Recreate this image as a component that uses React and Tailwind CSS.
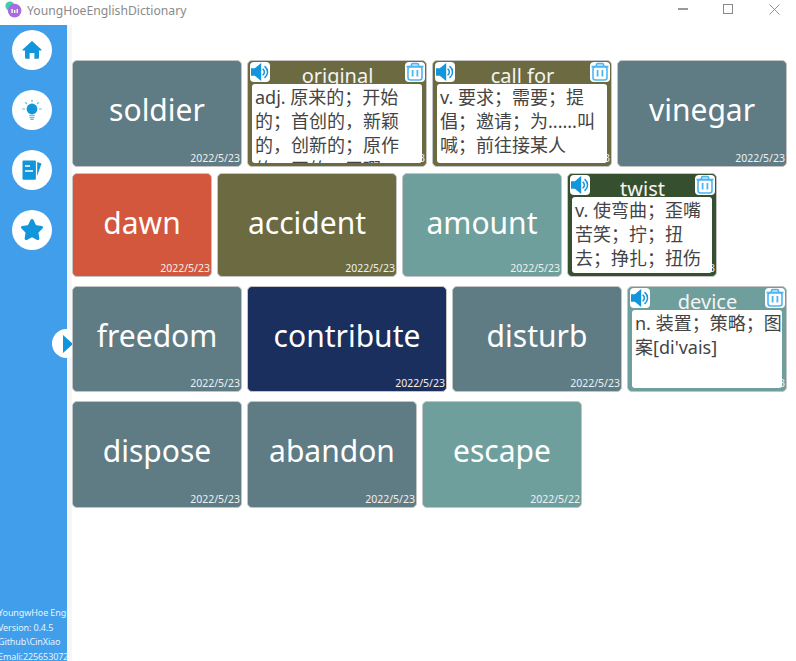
import { Star } from 'lucide-react'

const rows = [
  { h: 'h-[107px]', gap: 'mt-0', pad: 'pb-[8px]', cards: [
    { word: 'soldier', w: 'w-[170px]', bg: 'bg-[#5f7b84]', date: '2022/5/23' },
    { word: 'original', w: 'w-[180px]', bg: 'bg-[#6c6a41]', date: '2022/5/23', open: true, text: 'adj. 原来的；开始的；首创的，新颖的，创新的；原作的；正的；无瑕' },
    { word: 'call for', w: 'w-[180px]', bg: 'bg-[#6c6a41]', date: '2022/5/23', open: true, text: 'v. 要求；需要；提倡；邀请；为......叫喊；前往接某人' },
    { word: 'vinegar', w: 'w-[170px]', bg: 'bg-[#5f7b84]', date: '2022/5/23' },
  ] },
  { h: 'h-[104px]', gap: 'mt-[6px]', pad: 'pb-[6px]', cards: [
    { word: 'dawn', w: 'w-[140px]', bg: 'bg-[#d2573c]', date: '2022/5/23' },
    { word: 'accident', w: 'w-[180px]', bg: 'bg-[#6c6a41]', date: '2022/5/23' },
    { word: 'amount', w: 'w-[160px]', bg: 'bg-[#6f9f9c]', date: '2022/5/23' },
    { word: 'twist', w: 'w-[150px]', bg: 'bg-[#36502f]', date: '2022/5/23', open: true, text: 'v. 使弯曲；歪嘴苦笑；拧；扭去；挣扎；扭伤' },
  ] },
  { h: 'h-[106px]', gap: 'mt-[9px]', pad: 'pb-[8px]', cards: [
    { word: 'freedom', w: 'w-[170px]', bg: 'bg-[#5f7b84]', date: '2022/5/23' },
    { word: 'contribute', w: 'w-[200px]', bg: 'bg-[#1a2f5d]', date: '2022/5/23' },
    { word: 'disturb', w: 'w-[170px]', bg: 'bg-[#5f7b84]', date: '2022/5/23' },
    { word: 'device', w: 'w-[160px]', bg: 'bg-[#6f9f9c]', date: '2022/5/23', open: true, text: "n. 装置；策略；图案[di'vais]" },
  ] },
  { h: 'h-[107px]', gap: 'mt-[9px]', pad: 'pb-[8px]', cards: [
    { word: 'dispose', w: 'w-[170px]', bg: 'bg-[#5f7b84]', date: '2022/5/23' },
    { word: 'abandon', w: 'w-[170px]', bg: 'bg-[#5f7b84]', date: '2022/5/23' },
    { word: 'escape', w: 'w-[160px]', bg: 'bg-[#6f9f9c]', date: '2022/5/22' },
  ] },
]

function SpeakerIcon() {
  return (
    <svg viewBox="0 0 20 20" className="w-5 h-5 rounded-[4px] bg-white flex-shrink-0">
      <path d="M1 6.2 h3.8 l6.4 -5.2 v18 l-6.4 -5.2 h-3.8 z" fill="#1296db" />
      <path d="M13 7.2 a3.6 3.6 0 0 1 0 5.6 M15 4.6 a7 7 0 0 1 0 10.8" fill="none" stroke="#1296db" strokeWidth="1.5" strokeLinecap="round" />
    </svg>
  )
}

function TrashIcon() {
  return (
    <svg viewBox="0 0 20 20" className="w-5 h-5 rounded-[4px] bg-white flex-shrink-0">
      <path d="M1.5 4.6 h17 M6.5 4 V2.8 a1.2 1.2 0 0 1 1.2 -1.2 h4.6 a1.2 1.2 0 0 1 1.2 1.2 V4" fill="none" stroke="#4db5f0" strokeWidth="1.6" />
      <rect x="3" y="4.6" width="14" height="13.4" rx="2.4" fill="none" stroke="#4db5f0" strokeWidth="1.6" />
      <path d="M7.6 8 v6.4 M12.4 8 v6.4" stroke="#4db5f0" strokeWidth="1.8" />
    </svg>
  )
}

function HomeIcon() {
  return (
    <svg viewBox="0 0 20 20" className="w-5 h-5">
      <path d="M10 1 L19.4 9.6 a.6.6 0 0 1 -.4 1 H17 V17.6 a1.2 1.2 0 0 1 -1.2 1.2 H12.4 V13 H7.6 V18.8 H4.2 a1.2 1.2 0 0 1 -1.2 -1.2 V10.6 H1 a.6.6 0 0 1 -.4 -1 z" fill="#1296db" />
    </svg>
  )
}

function BulbIcon() {
  return (
    <svg viewBox="0 0 20 22" className="w-[20px] h-[22px]">
      <circle cx="10" cy="10" r="5.4" fill="#1296db" />
      <path d="M7.6 16.6 h4.8 M8 18.6 h4 M8.8 20.4 h2.4" stroke="#6cbce8" strokeWidth="1.2" strokeLinecap="round" />
      <path d="M10 1 v1.6 M3.6 3.6 l1.1 1.1 M16.4 3.6 l-1.1 1.1 M.8 10 h1.8 M17.4 10 h1.8" stroke="#5cb5e8" strokeWidth="1.2" strokeLinecap="round" />
    </svg>
  )
}

function BookIcon() {
  return (
    <svg viewBox="0 0 20 20" className="w-[20px] h-[20px]">
      <path d="M0.5 1.4 a1 1 0 0 1 1 -1 h11.4 a1 1 0 0 1 1 1 v17.4 a1 1 0 0 1 -1 1 h-11.4 a1 1 0 0 1 -1 -1 z" fill="#1296db" />
      <path d="M3 6 h5 M3 11 h8" stroke="#fff" strokeWidth="1.3" />
      <path d="M15.2 2 l4.3 1.4 -4.3 12.6 z" fill="#1296db" />
    </svg>
  )
}

function Card({ card, height, pad }) {
  if (card.open) {
    return (
      <div className={`${card.w} ${height} ${card.bg} relative z-10 flex flex-col rounded-[5px] border border-[#c4c4c4] overflow-hidden px-[4px] pb-[3px]`}>
        <span className="absolute right-[1px] bottom-[1px] text-[10.5px] leading-[14px] text-[#f0f0f0]">{card.date}</span>
        <div className="h-[23px] -ml-[2px] -mr-[3px] flex justify-between items-start pt-[1px] flex-shrink-0">
          <SpeakerIcon />
          <span className="text-xl leading-[27px] text-[#f4f4f4] whitespace-nowrap">{card.word}</span>
          <TrashIcon />
        </div>
        <div className="relative flex-1 min-h-0 overflow-hidden rounded-[3px] bg-white text-[#444] text-[18px] leading-[24px] pl-[3px] pt-[1px]">
          {card.text}
        </div>
      </div>
    )
  }
  return (
    <div className={`${card.w} ${height} ${card.bg} ${pad} relative z-10 flex items-center justify-center rounded-[5px] border border-[#c4c4c4]`}>
      <span className="text-[30px] text-white">{card.word}</span>
      <span className="absolute right-[1px] bottom-[1px] text-[10.5px] leading-[14px] text-[#f0f0f0]">{card.date}</span>
    </div>
  )
}

export default function App() {
  return (
    <div className="h-[661px] w-[796px] overflow-hidden bg-white flex flex-col relative font-['Noto_Sans','Noto_Sans_CJK_SC',sans-serif]">
      <div className="h-[25px] flex items-start flex-shrink-0">
        <svg viewBox="0 0 17 17" className="w-[17px] h-[17px] ml-[5px] mt-[1px]">
          <circle cx="5" cy="5" r="4.6" fill="#3fd0a8" />
          <circle cx="9.6" cy="9.6" r="6.8" fill="#a96be0" />
          <rect x="6.4" y="8" width="1.4" height="4" fill="#fff" />
          <rect x="9" y="9" width="1.4" height="3" fill="#fff" />
          <rect x="11.6" y="8" width="1.4" height="4" fill="#fff" />
        </svg>
        <span className="ml-[5px] text-[12.2px] leading-[21px] text-[#8a8a8a]">YoungHoeEnglishDictionary</span>
        <div className="ml-auto -mr-px flex items-center h-[18px]">
          <span className="w-[46px] flex justify-center pl-[2px]"><span className="w-[10px] h-[2px] bg-[#999]" /></span>
          <span className="w-[46px] flex justify-center"><span className="w-[10px] h-[10px] border border-[#888]" /></span>
          <span className="w-[46px] flex justify-center">
            <svg viewBox="0 0 11 11" className="w-[11px] h-[11px]"><path d="M.5 .5 l10 10 M10.5 .5 l-10 10" stroke="#888" strokeWidth="0.9" /></svg>
          </span>
        </div>
      </div>
      <div className="flex flex-1 min-h-0">
        <aside className="w-[67px] bg-[#409eea] flex flex-col items-center pt-[5px] overflow-hidden flex-shrink-0">
          <div className="flex flex-col gap-[20px] pr-[3px]">
            <div className="w-10 h-10 rounded-full bg-white flex items-center justify-center"><HomeIcon /></div>
            <div className="w-10 h-10 rounded-full bg-white flex items-center justify-center"><BulbIcon /></div>
            <div className="w-10 h-10 rounded-full bg-white flex items-center justify-center"><BookIcon /></div>
            <div className="w-10 h-10 rounded-full bg-white flex items-center justify-center"><Star className="w-[24px] h-[24px] text-[#1296db]" fill="#1296db" /></div>
          </div>
          <div className="mt-auto w-full text-[9px] leading-[14.5px] tracking-[-0.1px] text-[#e8f3fc] whitespace-nowrap -ml-[4px] -mb-[3px]">
            <div>YoungwHoe English</div>
            <div>Version: 0.4.5</div>
            <div>Github\CinXiao</div>
            <div>Emali:2256530727</div>
          </div>
        </aside>
        <div className="w-[5px] bg-[#f6f6f6] flex-shrink-0" />
        <main className="flex-1 pt-[35px] flex flex-col">
          {rows.map((row, i) => (
            <div key={i} className={`flex gap-[5px] ${row.gap}`}>
              {row.cards.map(card => <Card key={card.word} card={card} height={row.h} pad={row.pad} />)}
            </div>
          ))}
        </main>
      </div>
      <div className="absolute left-[52px] top-[329px] w-[29px] h-[29px] rounded-full bg-white flex items-center pl-[11px]">
        <span className="w-0 h-0 border-y-[9px] border-y-transparent border-l-[10px] border-l-[#1296db]" />
      </div>
    </div>
  )
}
